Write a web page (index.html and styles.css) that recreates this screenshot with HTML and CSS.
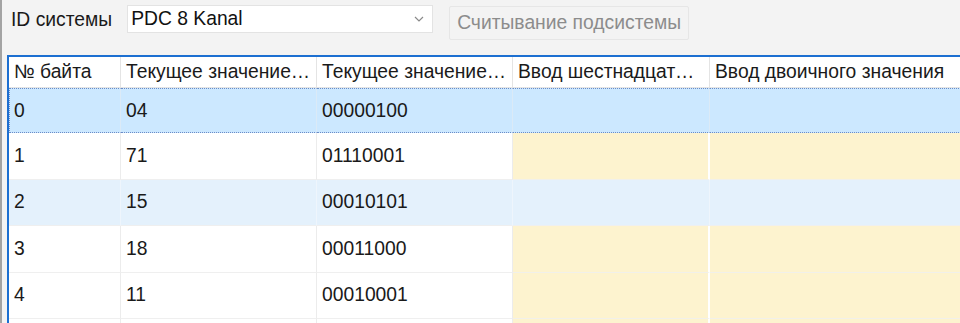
FILE: index.html
```html
<!DOCTYPE html>
<html lang="ru">
<head>
    <meta charset="UTF-8">
    <title>PDC 8 Kanal</title>
    <link rel="stylesheet" href="styles.css">
</head>
<body>
    <div class="window">
        <div class="toolbar">
            <span class="label">ID системы</span>
            <div class="select">
                <span>PDC 8 Kanal</span>
                <svg class="chevron" width="10" height="6" viewBox="0 0 10 6">
                    <path d="M1 1 L5 5 L9 1" fill="none" stroke="#8a8a8a" stroke-width="1.2"/>
                </svg>
            </div>
            <button class="read-btn" disabled>Считывание подсистемы</button>
        </div>

        <div class="grid-panel">
            <table class="grid">
                <colgroup>
                    <col class="c1">
                    <col class="c2">
                    <col class="c3">
                    <col class="c4">
                    <col class="c5">
                </colgroup>
                <thead>
                    <tr>
                        <th>№ байта</th>
                        <th>Текущее значение…</th>
                        <th>Текущее значение…</th>
                        <th>Ввод шестнадцате…</th>
                        <th>Ввод двоичного значения</th>
                    </tr>
                </thead>
                <tbody>
                    <tr class="selected">
                        <td>0</td><td>04</td><td>00000100</td><td></td><td></td>
                    </tr>
                    <tr>
                        <td>1</td><td>71</td><td>01110001</td><td class="edit"></td><td class="edit"></td>
                    </tr>
                    <tr class="alt">
                        <td>2</td><td>15</td><td>00010101</td><td></td><td></td>
                    </tr>
                    <tr>
                        <td>3</td><td>18</td><td>00011000</td><td class="edit"></td><td class="edit"></td>
                    </tr>
                    <tr>
                        <td>4</td><td>11</td><td>00010001</td><td class="edit"></td><td class="edit"></td>
                    </tr>
                    <tr>
                        <td></td><td></td><td></td><td class="edit"></td><td class="edit"></td>
                    </tr>
                </tbody>
            </table>
        </div>
    </div>
</body>
</html>
```

FILE: styles.css
```css
body {
    margin: 0;
    background-color: #f3f3f3;
    font-family: "Liberation Sans", Arial, sans-serif;
    font-size: 19.3px;
    color: #1a1a1a;
    overflow: hidden;
}

.window {
    height: 323px;
    border-left: 2px solid #a3a3a3;
    overflow: hidden;
}

.toolbar {
    display: flex;
    align-items: flex-start;
    height: 55px;
    padding-left: 9px;
}

.label {
    margin-top: 9px;
    margin-right: 15px;
}

.select {
    display: flex;
    align-items: center;
    justify-content: space-between;
    box-sizing: border-box;
    width: 306px;
    height: 28px;
    margin-top: 5px;
    padding: 0 8px 0 3px;
    background-color: #fff;
    border: 1px solid #e3e3e3;
    color: #111;
}

.read-btn {
    box-sizing: border-box;
    height: 34px;
    margin-top: 6px;
    margin-left: 16px;
    padding: 0 7px;
    font-family: inherit;
    font-size: 19.3px;
    color: #8c8c8c;
    background-color: #f3f3f3;
    border: 1px solid #e6e6e6;
    border-radius: 2px;
}

/* таблица */
.grid-panel {
    margin-left: 5px;
    border-top: 2px solid #1c6fd1;
    border-left: 2px solid #1c6fd1;
    background-color: #fff;
    height: 300px;
    overflow: hidden;
}

.grid {
    table-layout: fixed;
    border-collapse: separate;
    border-spacing: 0;
    width: 1000px;
}

.c1 { width: 112px; }
.c2 { width: 196px; }
.c3 { width: 196px; }
.c4 { width: 197px; }
.c5 { width: 299px; }

.grid th {
    height: 30px;
    padding: 0 5px;
    font-weight: normal;
    text-align: left;
    white-space: nowrap;
    overflow: hidden;
    text-overflow: ellipsis;
    background-color: #fff;
    border-right: 1px solid #e4e4e4;
    border-bottom: 1px solid #e4e4e4;
}

.grid td {
    height: 45.4px;
    padding: 0 5px;
    white-space: nowrap;
    overflow: hidden;
    border-right: 1px solid #ececec;
    border-bottom: 1px solid #efefef;
}

.grid tr.selected td {
    height: 43.4px;
    background-color: #cce8ff;
    border-top: 1px dotted #6b8cc7;
    border-bottom: 1px dotted #6b8cc7;
    border-right: 1px solid #dbeaf7;
}

.grid tr.selected td:first-child {
    border-left: 1px dotted #6b8cc7;
    padding-left: 4px;
}

.grid tr.alt td {
    background-color: #e4f1fc;
    border-right: 1px solid #eef5fc;
}

.grid td.edit {
    background-color: #fdf3cf;
    border-right: 2px solid #fff;
    border-bottom: 1px solid #f1f0ea;
}
```
